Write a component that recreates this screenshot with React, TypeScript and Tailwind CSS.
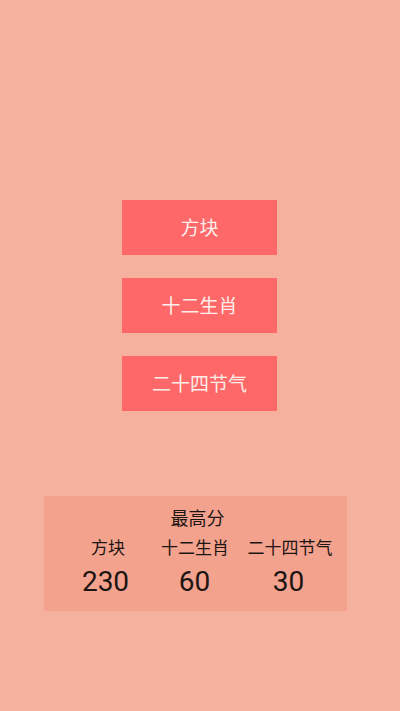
export default function App() {
  const scores = [
    { name: "方块", score: 230, w: "w-[84px]", nudge: "pr-[5px]" },
    { name: "十二生肖", score: 60, w: "w-[90px]", nudge: "pr-[1px]" },
    { name: "二十四节气", score: 30, w: "w-[100px]", nudge: "pr-[3px]" },
  ];

  return (
    <div
      className="h-[711px] w-[400px] bg-[#f6b09e] flex flex-col items-center"
      style={{ fontFamily: '"Noto Sans CJK SC", Roboto, sans-serif' }}
    >
      {/* Menu buttons */}
      <div className="mt-[200px] flex flex-col gap-[23px] mr-[1px]">
        {["方块", "十二生肖", "二十四节气"].map((label) => (
          <button
            key={label}
            className="w-[155px] h-[55px] bg-[#fe6868] text-[#fdeeea] text-[19px] flex items-center justify-center pb-[1px]"
          >
            {label}
          </button>
        ))}
      </div>

      {/* High scores */}
      <div className="self-start ml-[44px] mt-[85px] w-[303px] h-[115px] bg-[#f3a28e] flex flex-col items-center pt-[4px] text-[#1d1512]">
        <div className="text-[18px] leading-[34px] pl-[4px]">最高分</div>
        <div className="flex w-full pl-[22px]">
          {scores.map((s) => (
            <div key={s.name} className={`${s.w} flex flex-col items-center`}>
              <div className="text-[17px] leading-[26px]">{s.name}</div>
              <div className={`${s.nudge} text-[28px] leading-[44px]`} style={{ fontFamily: "Roboto, sans-serif" }}>
                {s.score}
              </div>
            </div>
          ))}
        </div>
      </div>
    </div>
  );
}
